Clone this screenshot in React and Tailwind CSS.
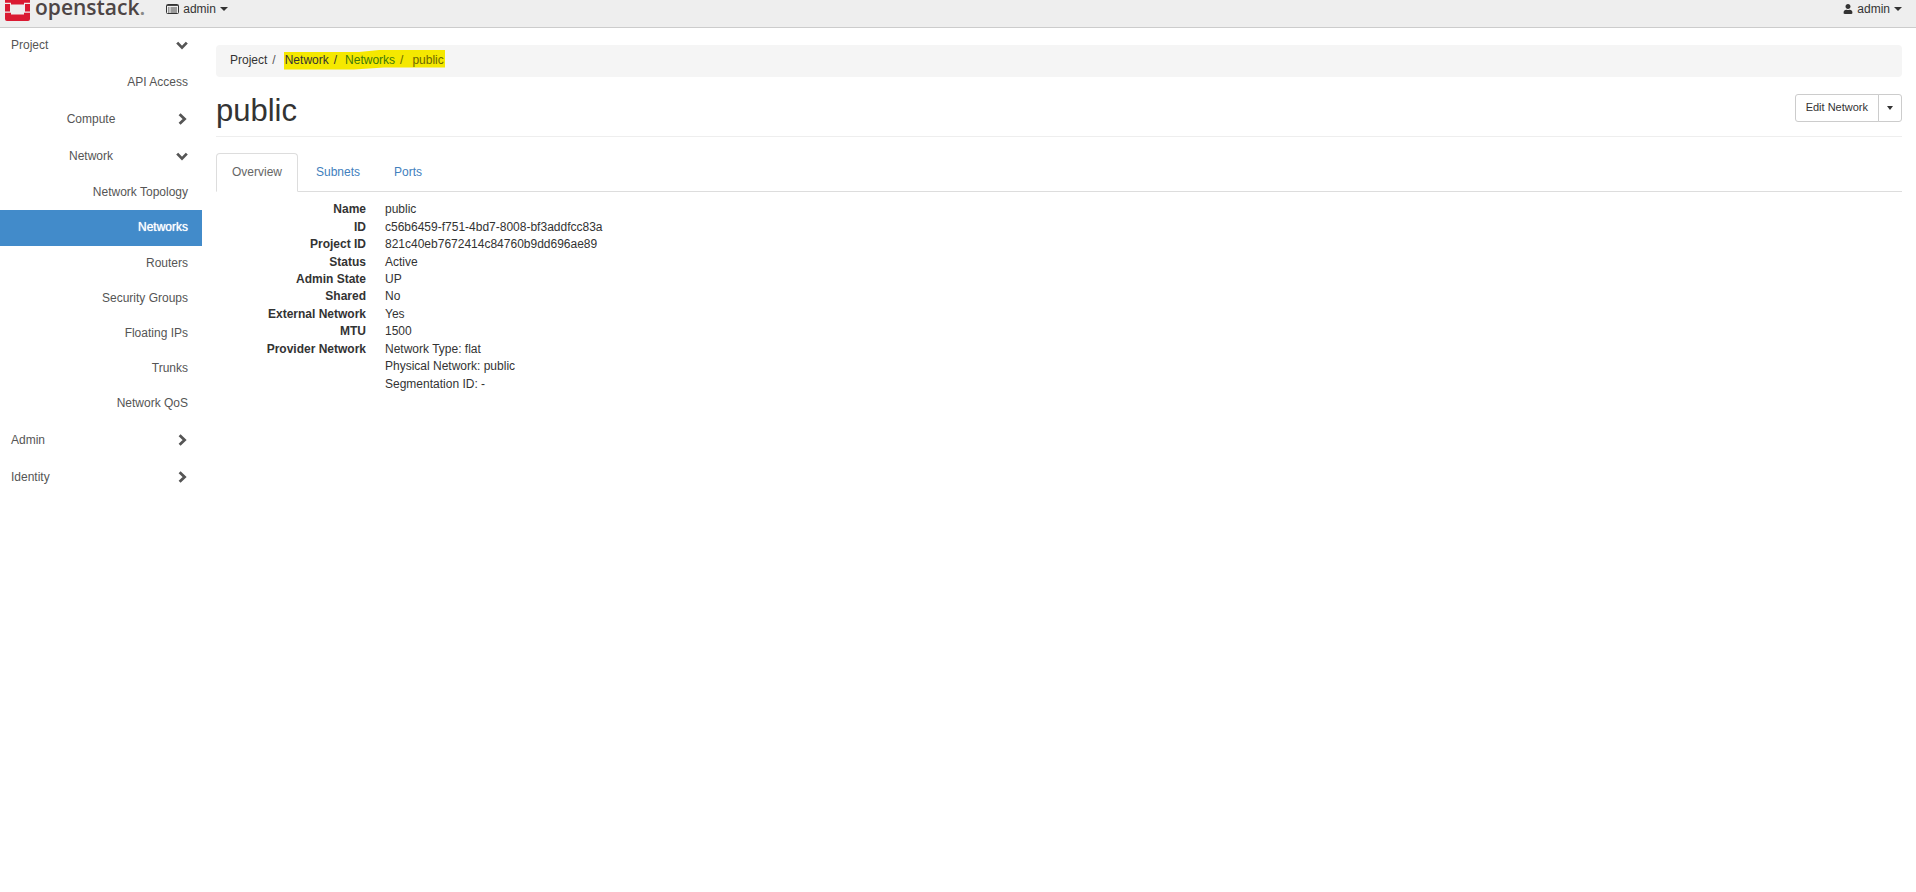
import React, { useState } from 'react';
import { FaUser } from 'react-icons/fa';
import clsx from 'clsx';

const networkPanels = [
  'Network Topology',
  'Networks',
  'Routers',
  'Security Groups',
  'Floating IPs',
  'Trunks',
  'Network QoS',
];

const tabs = ['Overview', 'Subnets', 'Ports'];

const details = [
  ['Name', 'public'],
  ['ID', 'c56b6459-f751-4bd7-8008-bf3addfcc83a'],
  ['Project ID', '821c40eb7672414c84760b9dd696ae89'],
  ['Status', 'Active'],
  ['Admin State', 'UP'],
  ['Shared', 'No'],
  ['External Network', 'Yes'],
  ['MTU', '1500'],
  ['Provider Network', 'Network Type: flat'],
  ['', 'Physical Network: public'],
  ['', 'Segmentation ID: -'],
];

const Caret = () => (
  <svg viewBox="0 0 8 4" className="h-1 w-2 shrink-0" fill="currentColor" aria-hidden="true">
    <path d="M0 0H8L4 4Z" />
  </svg>
);

const Chevron = ({ open }) => (
  <svg
    viewBox="0 0 12 12"
    className={clsx('size-3 shrink-0', open && 'rotate-90')}
    fill="none"
    stroke="currentColor"
    strokeWidth="2.8"
    aria-hidden="true"
  >
    <path d="M3.6 1.2 8.6 6 3.6 10.8" />
  </svg>
);

// only the lower part of the mark shows, the bar is cut at the top of the window
const LogoMark = () => (
  <svg viewBox="0 0 25 21" className="h-[21px] w-[25px] shrink-0" aria-hidden="true">
    <path
      fill="#da1a32"
      d="M0 0H25V2.8H19V4.5H6V2.8H0ZM0 4H5V11.4H0ZM20 4H25V11.4H20ZM0 12.8H6V14.5H19V12.8H25V19Q25 21 23 21H2Q0 21 0 19Z"
    />
  </svg>
);

const ProjectIcon = () => (
  <svg viewBox="0 0 13 10" className="h-[10px] w-[13px]" fill="none" stroke="currentColor" aria-hidden="true">
    <rect x="0.5" y="0.5" width="12" height="9" rx="1" />
    <path d="M1 1.5h11M2 4h1.5M2 6h1.5M2 8h1.5M4.5 4h6.5M4.5 6h6.5M4.5 8h6.5" strokeWidth="0.9" />
  </svg>
);

const Group = ({ label, open, nested }) => (
  <button
    type="button"
    aria-expanded={!!open}
    className="flex h-[37px] w-full items-center justify-between pr-[14px] pb-0.5 pl-[11px]"
  >
    <span className={clsx(nested && 'w-40 text-center')}>{label}</span>
    <Chevron open={open} />
  </button>
);

const Panel = ({ label, active }) => (
  <li>
    <a
      href="#"
      className={clsx(
        'flex items-center justify-end pr-[14px] pb-0.5',
        active ? 'h-9 bg-[#428bca] text-white [text-shadow:0_0_1px_#fff]' : 'h-[35px]'
      )}
    >
      {label}
    </a>
  </li>
);

const App = () => {
  const [tab, setTab] = useState('Overview');

  return (
    <div className="min-h-screen bg-white font-['Liberation_Sans',Arial,sans-serif] text-xs text-[#333]">
      <header className="flex h-7 items-start justify-between border-b border-[#ccc] bg-[#eee] pr-[14px] pl-[5px]">
        <div className="flex items-start">
          <a href="#" className="flex items-start gap-[5px]">
            <LogoMark />
            <span className="h-[21px] font-['Open_Sans',sans-serif] text-[21px] leading-[14px] font-semibold text-[#4d4545]">
              openstack<span className="text-[#888]">.</span>
            </span>
          </a>
          <button type="button" className="ml-[21px] flex h-[17px] items-center gap-1">
            <ProjectIcon />
            admin
            <Caret />
          </button>
        </div>
        <button type="button" className="flex h-[17px] items-center gap-1">
          <FaUser size={10} />
          admin
          <Caret />
        </button>
      </header>

      <div className="flex">
        <nav className="-mt-px w-[202px] shrink-0 text-[#555]">
          <Group label="Project" open />
          <ul className="py-px">
            <Panel label="API Access" />
          </ul>
          <Group label="Compute" nested />
          <Group label="Network" nested open />
          <ul className="pb-px">
            {networkPanels.map(label => (
              <Panel key={label} label={label} active={label === 'Networks'} />
            ))}
          </ul>
          <Group label="Admin" />
          <Group label="Identity" />
        </nav>

        <main className="min-w-0 flex-1 pt-[17px] pr-[14px] pl-[14px]">
          <ol className="flex h-8 items-center rounded bg-[#f5f5f5] pb-0.5 pl-[14px]">
            <li className="mr-2">
              Project<span className="pl-[5px] text-[#555]">/</span>
            </li>
            {/* highlighter stroke over the path */}
            <li className="relative">
              <svg
                viewBox="0 0 161 21"
                preserveAspectRatio="none"
                className="absolute inset-0 h-full w-full"
                aria-hidden="true"
              >
                <path fill="#f5e800" d="M0 2H75L95 0H161V17.5H100L70 19.5H0Z" />
              </svg>
              <ol className="relative flex h-[21px] items-center">
                <li className="pl-px">
                  Network<span className="px-[5px]">/</span>
                </li>
                <li className="pl-[3px]">
                  <a href="#" className="text-[#40780a]">Networks</a>
                  <span className="px-[5px] text-[#666600]">/</span>
                </li>
                <li className="pr-px pl-1 text-[#6b6600]">public</li>
              </ol>
            </li>
          </ol>

          <div className="flex h-15 items-center justify-between border-b border-[#eee]">
            <h1 className="pt-2 text-[31px] leading-[33px]">public</h1>
            <div className="mt-0.5 flex h-7 text-[11px]">
              <button type="button" className="rounded-l-[3px] border border-[#ccc] px-[10px]">
                Edit Network
              </button>
              <button
                type="button"
                aria-label="More actions"
                className="-ml-px flex w-6 items-center justify-center rounded-r-[3px] border border-[#ccc]"
              >
                <svg viewBox="0 0 6 4" className="h-1 w-1.5" fill="currentColor" aria-hidden="true">
                  <path d="M0 0H6L3 4Z" />
                </svg>
              </button>
            </div>
          </div>

          <div role="tablist" className="mt-4 flex h-[39px] gap-0.5 border-b border-[#ddd]">
            {tabs.map(name => (
              <button
                key={name}
                type="button"
                role="tab"
                aria-selected={tab === name}
                onClick={() => setTab(name)}
                className={clsx(
                  '-mb-px rounded-t border px-[15px] pb-0.5',
                  tab === name
                    ? 'border-[#ddd] border-b-white bg-white text-[#666]'
                    : 'border-transparent text-[#4280bd]'
                )}
              >
                {name}
              </button>
            ))}
          </div>

          <dl className="mt-[9px] grid min-h-48 auto-rows-fr">
            {details.map(([term, value]) => (
              <div key={value} className="flex items-center gap-[19px] leading-[17px]">
                <dt className="w-[150px] text-right font-bold">{term}</dt>
                <dd>{value}</dd>
              </div>
            ))}
          </dl>
        </main>
      </div>
    </div>
  );
};

export default App;
